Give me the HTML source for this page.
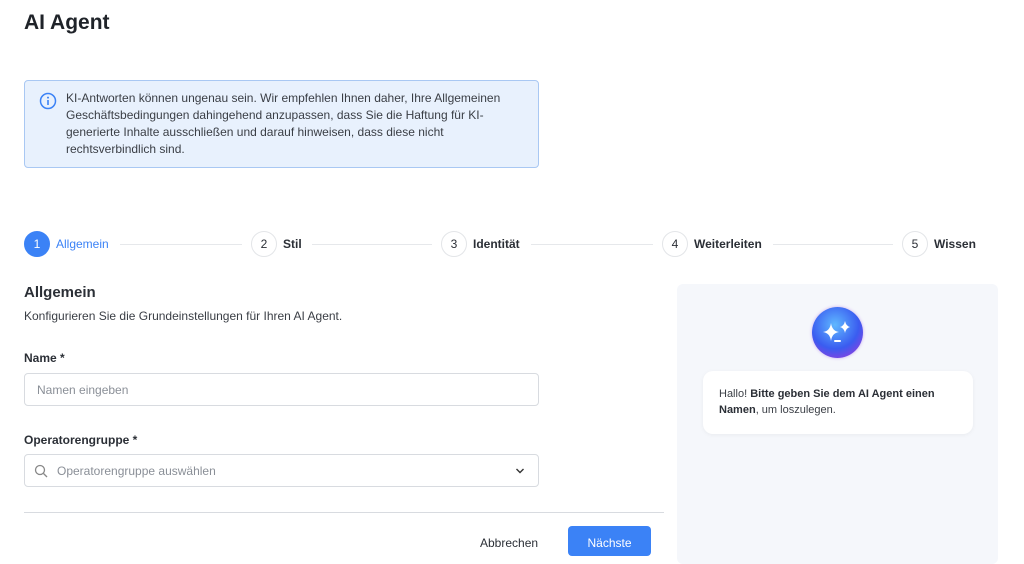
<!DOCTYPE html>
<html><head><meta charset="utf-8"><style>
*{box-sizing:border-box;margin:0;padding:0}
body{width:1024px;height:550px;overflow:hidden;background:#fff;font-family:"Liberation Sans",sans-serif;color:#2b2f36;position:relative}
.a{position:absolute}
h1{position:absolute;left:24px;top:11px;font-size:21px;font-weight:bold;color:#1f2329}
.info{left:24px;top:80px;width:515px;height:88px;background:#e8f1fd;border:1px solid #a9c8f3;border-radius:4px}
.info p{position:absolute;left:41px;top:9px;width:470px;font-size:12px;line-height:17px;color:#3a3e45;white-space:nowrap}
.step{position:absolute;top:231px;display:flex;align-items:center;font-size:12px;font-weight:bold;color:#2b2f36}
.c{width:26px;height:26px;border-radius:50%;border:1px solid #e3e5e8;display:flex;align-items:center;justify-content:center;font-weight:normal;margin-right:6px;font-size:12px}
.line{position:absolute;top:244px;height:1px;background:#e6e8eb}
.lbl{font-size:12px;font-weight:bold}
.inp{position:absolute;left:24px;width:515px;height:33px;border:1px solid #d8dbe0;border-radius:4px;font-size:12px;color:#8a8f97}
.btn{position:absolute;left:568px;top:526px;width:83px;height:30px;background:#3b82f6;border-radius:4px;color:#fff;font-size:12px;text-align:center;line-height:34px}
</style></head><body>
<h1>AI Agent</h1>
<div class="a info">
<svg class="a" style="left:14px;top:11px" width="18" height="18" viewBox="0 0 18 18"><circle cx="9" cy="9" r="7.5" fill="none" stroke="#3b82f6" stroke-width="1.5"/><rect x="8.2" y="8" width="1.6" height="5" fill="#3b82f6"/><circle cx="9" cy="5.6" r="1" fill="#3b82f6"/></svg>
<p>KI-Antworten können ungenau sein. Wir empfehlen Ihnen daher, Ihre Allgemeinen<br>Geschäftsbedingungen dahingehend anzupassen, dass Sie die Haftung für KI-<br>generierte Inhalte ausschließen und darauf hinweisen, dass diese nicht<br>rechtsverbindlich sind.</p>
</div>
<div class="line" style="left:120px;width:122px"></div>
<div class="line" style="left:312px;width:120px"></div>
<div class="line" style="left:531px;width:122px"></div>
<div class="line" style="left:773px;width:120px"></div>
<div class="step" style="left:24px;color:#3b82f6;font-weight:normal"><div class="c" style="background:#3b82f6;border-color:#3b82f6;color:#fff">1</div>Allgemein</div>
<div class="step" style="left:251px"><div class="c">2</div>Stil</div>
<div class="step" style="left:441px"><div class="c">3</div>Identität</div>
<div class="step" style="left:662px"><div class="c">4</div>Weiterleiten</div>
<div class="step" style="left:902px"><div class="c">5</div>Wissen</div>
<div class="a" style="left:24px;top:284px;font-size:15px;font-weight:bold">Allgemein</div>
<div class="a" style="left:24px;top:309px;font-size:12px;color:#3a3e45">Konfigurieren Sie die Grundeinstellungen für Ihren AI Agent.</div>
<div class="a lbl" style="left:24px;top:351px">Name *</div>
<div class="inp" style="top:373px;padding:9px 12px">Namen eingeben</div>
<div class="a lbl" style="left:24px;top:433px">Operatorengruppe *</div>
<div class="inp" style="top:454px;padding:9px 32px">Operatorengruppe auswählen
<svg class="a" style="left:9px;top:9px" width="14" height="14" viewBox="0 0 14 14"><circle cx="6" cy="6" r="4.5" fill="none" stroke="#888" stroke-width="1.3"/><path d="M9.5 9.5L13 13" stroke="#888" stroke-width="1.3"/></svg>
<svg class="a" style="left:490px;top:12px" width="10" height="8" viewBox="0 0 10 8"><path d="M1.5 2L5 5.5 8.5 2" fill="none" stroke="#333" stroke-width="1.4"/></svg></div>
<div class="a" style="left:24px;top:512px;width:640px;height:1px;background:#d8dbe0"></div>
<div class="a" style="left:480px;top:536px;font-size:12px">Abbrechen</div>
<div class="btn">Nächste</div>
<div class="a" style="left:677px;top:284px;width:321px;height:280px;background:#f5f7fb;border-radius:6px"></div>
<div class="a" style="left:812px;top:307px;width:51px;height:51px;border-radius:50%;background:radial-gradient(circle at 45% 35%,#5fb8ff,#3a5cf0 55%,#8a3fe0 85%,#d7a0f5);box-shadow:0 0 3px #c8a8f0"></div>
<svg class="a" style="left:812px;top:307px" width="51" height="51" viewBox="0 0 51 51"><path d="M19 16Q20 24 27 25Q20 26 19 34Q18 26 11 25Q18 24 19 16Z" fill="#fff"/><path d="M33 14Q34 19 38 20Q34 21 33 26Q32 21 28 20Q32 19 33 14Z" fill="#fff"/><rect x="22" y="33" width="7" height="2" rx="1" fill="#fff"/></svg>
<div class="a" style="left:703px;top:371px;width:270px;height:63px;background:#fff;border-radius:10px;box-shadow:0 1px 4px rgba(0,0,0,.05);padding:15px 16px;font-size:11px;line-height:16px;color:#3a3e45">Hallo! <b style="color:#2b2f36">Bitte geben Sie dem AI Agent einen Namen</b>, um loszulegen.</div>
</body></html>
